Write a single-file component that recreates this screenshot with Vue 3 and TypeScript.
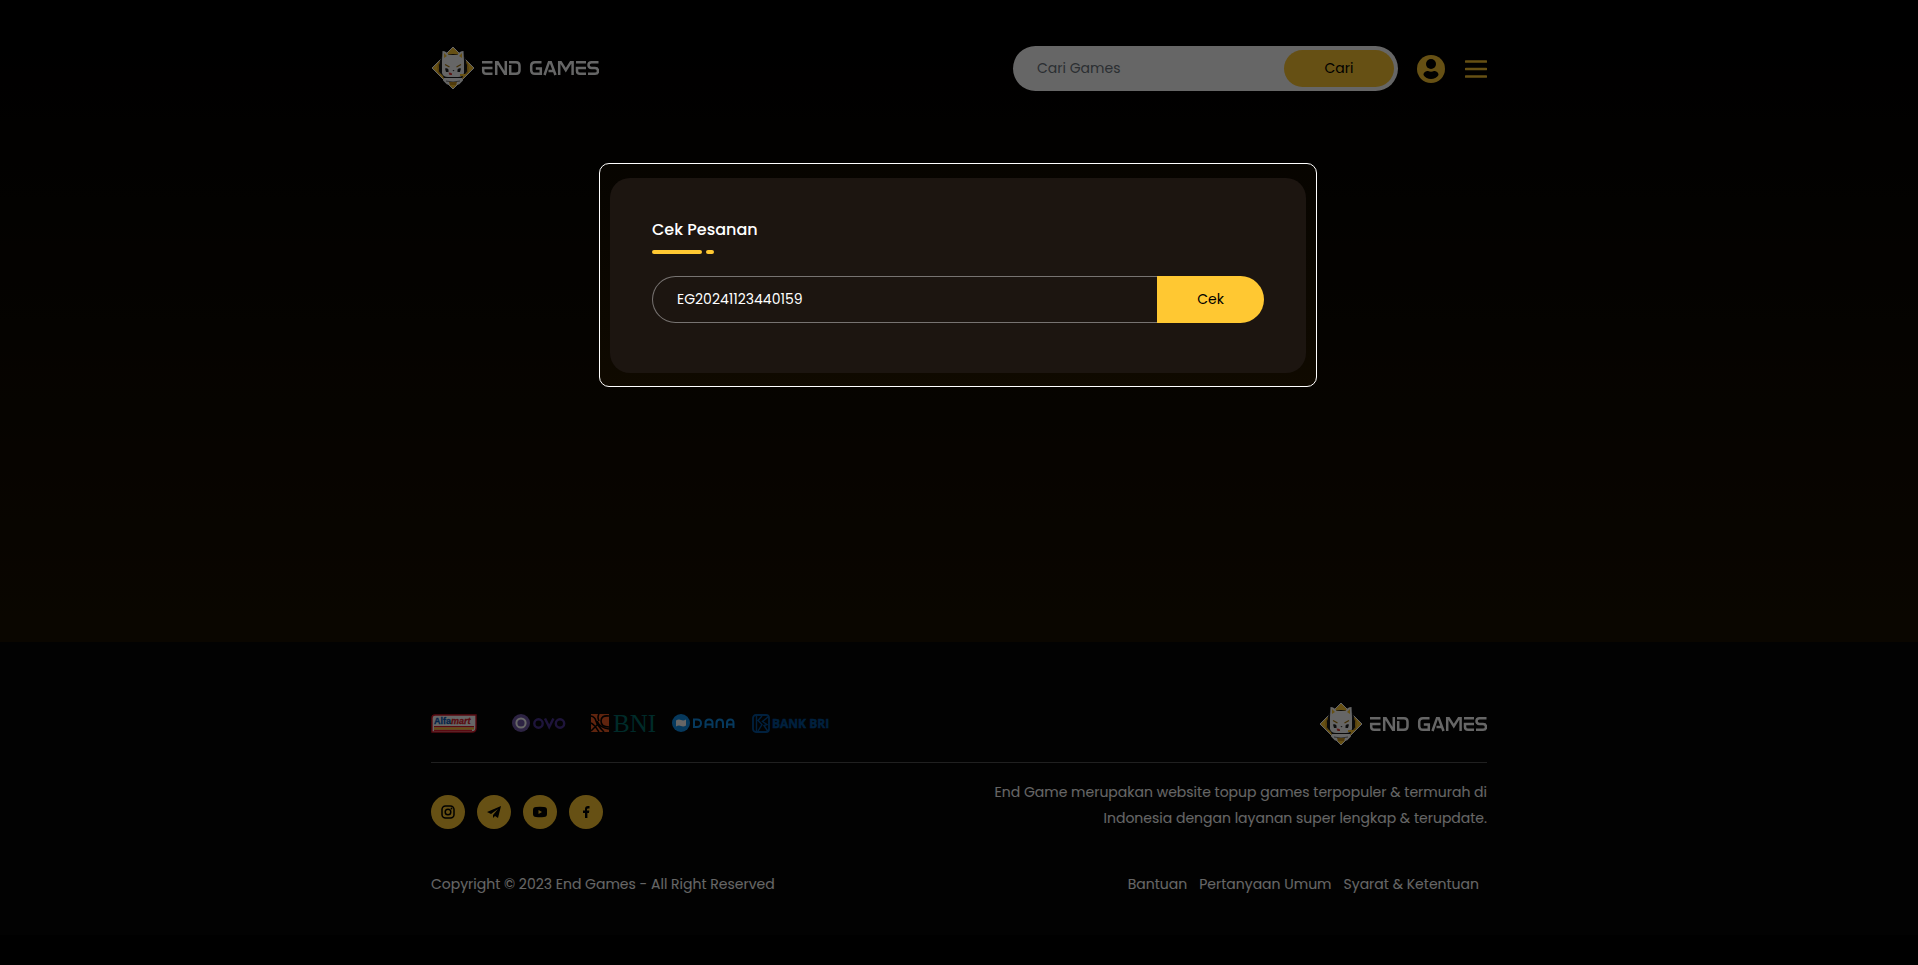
<script setup lang="ts">
import { ref } from 'vue'

const query = ref('')
const orderId = ref('EG20241123440159')
const links = ['Bantuan', 'Pertanyaan Umum', 'Syarat & Ketentuan']
</script>

<template>
  <div class="page">
    <svg class="defs" aria-hidden="true">
      <symbol id="brand" viewBox="0 0 168 44">
        <path d="M22 1 43 22 22 43 1 22Z" fill="#ffc832" stroke="#fff" stroke-width="1" />
        <path d="M10 11q12-6 24 0l2 7v8l-4 4-3 8H15l-3-8-4-4v-8Z" fill="#1a1a1a" />
        <path d="M8.500 16q-3 6 0 12M35.500 16q3 6 0 12" fill="none" stroke="#c8911c" stroke-width="1.200" />
        <path d="M11 15 11.500 5q4 0 6 4h9q2-4 6-4L33 15v12q-1 4-6 4H17q-5 0-6-4Z" fill="#fff" />
        <path d="M13 7v5l3-2ZM31 7v5l-3-2Z" fill="#ffc832" />
        <path d="M14 18.500l4.500 2.500M30 18.500l-4.500 2.500" stroke="#a8760c" stroke-width="1.300" />
        <path d="M14 22.500q2-1 3.500 1v2.500H15ZM30 22.500q-2-1-3.500 1v2.500H29Z" fill="#222" />
        <path d="M21.500 24h2l-1 1.500Z" fill="#444" />
        <path d="M17.500 26.500q2.500 0 3.500 1v1.500h-2.500Z" fill="#e23a35" />
        <path d="M29 28h5v2h-5Z" fill="#ffc832" />
        <path d="M13 32h18l1 2.500-4 4H16l-4-4Z" fill="#fff" />
        <path d="M15 35q7 2 14 0" fill="none" stroke="#777" stroke-width="1" />
        <path d="M18 36h8l-1 3h-6Z" fill="#c8911c" />
        <g fill="none" stroke="#fff" stroke-width="2.500">
          <path d="M51 16.200h10.500M61.500 22H52.200v3q0 2.800 3 2.800h6.300M65.200 29V16.200h1.500l7.200 11.600h.9V15M78 16.200h7q3.500 0 3.500 3.500v4.600q0 3.500-3.500 3.500h-5.800V19M110.500 16.200h-6.500q-3.800 0-3.800 3.800v4q0 3.800 3.800 3.800h5.800V22.500h-5M113.500 29l4.500-12.800h1.800L124.500 29M117.500 25h5M128.200 29V16.200h1.600l5 8 5-8h1.800V29M145 16.200h10M155 22h-9v3q0 2.800 3 2.800h6M167.500 16.200h-7q-3 0-3 2.900t3 2.900h3.500q3 0 3 2.900t-3 2.900h-7" />
        </g>
      </symbol>
    </svg>

    <header class="container header">
      <a href="#" aria-label="End Games"><svg class="brand"><use href="#brand" /></svg></a>
      <div class="tools">
        <form class="search" @submit.prevent>
          <input v-model="query" type="text" aria-label="Cari Games" placeholder="Cari Games">
          <button type="submit">Cari</button>
        </form>
        <a class="icon-link" href="#" aria-label="Akun">
          <svg width="28" height="28" viewBox="0 0 28 28">
            <circle cx="14" cy="14" r="14" fill="#ffc832" />
            <circle cx="14" cy="9" r="5" fill="#000" />
            <path d="M6.500 20c0-3 2.500-4 4.500-4 2 1 4 1 6 0 2 0 4.500 1 4.500 4-3 5.200-12 5.200-15 0Z" fill="#000" />
          </svg>
        </a>
        <button class="menu" type="button" aria-label="Menu">
          <svg width="22" height="18" viewBox="0 0 22 18">
            <path d="M1 1.500h20M1 9h20M1 16.500h20" stroke="#ffc832" stroke-width="2.600" stroke-linecap="round" />
          </svg>
        </button>
      </div>
    </header>

    <main>
      <section class="spotlight">
        <div class="card">
          <h1>Cek Pesanan</h1>
          <div class="rule"><i class="long" /><i class="short" /></div>
          <form class="check" @submit.prevent>
            <input v-model="orderId" type="text" aria-label="Nomor pesanan">
            <button type="submit">Cek</button>
          </form>
        </div>
      </section>
    </main>

    <footer>
      <div class="container">
        <div class="row partners">
          <div class="payments">
            <svg width="80" height="20" viewBox="0 0 80 20" role="img" aria-label="Alfamart">
              <path d="M4 1h41v13q0 4-4 4H1V4q0-3 3-3Z" fill="#fff" stroke="#e01b2b" stroke-width="1.400" />
              <path d="M3 12h40v1.500H3ZM3 15.500h38v1.500H3Z" fill="#e01b2b" />
              <path d="M3 13.500h40v2H3Z" fill="#ffc832" />
              <text x="3" y="10" class="alfa" fill="#0b5db8" stroke="#0b5db8">Alfa<tspan fill="#e01b2b" stroke="#e01b2b" font-style="italic">mart</tspan></text>
            </svg>
            <svg width="80" height="20" viewBox="0 0 80 20" role="img" aria-label="OVO">
              <circle cx="10" cy="9" r="9" fill="#7059a8" />
              <circle cx="10" cy="9" r="4.600" fill="none" stroke="#fff" stroke-width="2" />
              <g fill="none" stroke="#4c3494" stroke-width="2.400">
                <circle cx="27.500" cy="9.500" r="4.200" />
                <path d="M34 4.500l4.200 8.500 4.200-8.500" />
                <circle cx="49" cy="9.500" r="4.200" />
              </g>
            </svg>
            <svg width="80" height="20" viewBox="0 0 80 20" role="img" aria-label="BNI">
              <path d="M0 0h18v18H0Z" fill="#f15a23" />
              <path d="M0 2q4 1 5 5t8 11M0 9q3 1 8 9M18 2q-8-1-8 5t8 6M18 15q-9-1-12-8M0 17l7-7M8 0Q6 3 8 7" fill="none" stroke="#000" stroke-width="1.600" />
              <text x="22" y="18" class="bni" fill="#006b66">BNI</text>
            </svg>
            <svg width="80" height="20" viewBox="0 0 80 20" role="img" aria-label="DANA">
              <circle cx="10" cy="9" r="9" fill="#108ee9" />
              <path d="M5 6.500q2.500-1.500 5-.5t5-.5v6q-2.500 1.500-5 .5t-5 .5Z" fill="#fff" />
              <path d="M23 14V5.500h3q4 0 4 3.700t-4 3.700h-3M34.500 14V9q0-3.500 3.500-3.500T41.500 9v5M34.500 10.500h7M45.500 14V9q0-3.500 3.200-3.500T52 9v5M56 14V9q0-3.500 3.300-3.500T62.500 9v5M56 10.500h6.500" fill="none" stroke="#108ee9" stroke-width="2" />
            </svg>
            <svg width="80" height="20" viewBox="0 0 80 20" role="img" aria-label="Bank BRI">
              <rect x="2" y="1" width="16" height="17" rx="3" fill="none" stroke="#00529c" stroke-width="1.800" />
              <path d="M5.500 2v15M11 2 7 6.500l4 4L7 17M17 3l-5.500 4.500 4.500 3-3 1 4 6" fill="none" stroke="#00529c" stroke-width="1.400" />
              <text x="21" y="14" class="bri" fill="#00529c" stroke="#00529c">BANK BRI</text>
            </svg>
          </div>
          <svg class="brand" role="img" aria-label="End Games"><use href="#brand" /></svg>
        </div>

        <div class="row about">
          <nav class="social" aria-label="Media sosial">
            <a href="#" aria-label="Instagram">
              <svg viewBox="0 0 16 16"><rect x="2" y="2" width="12" height="12" rx="3.500" fill="none" stroke="#000" stroke-width="1.500" /><circle cx="8" cy="8" r="2.800" fill="none" stroke="#000" stroke-width="1.500" /><circle cx="11.500" cy="4.500" r=".9" /></svg>
            </a>
            <a href="#" aria-label="Telegram">
              <svg viewBox="0 0 16 16"><path d="M15 2 1 8l4 2 7-5-5 6v3l2-2 3 2Z" /></svg>
            </a>
            <a href="#" aria-label="YouTube">
              <svg viewBox="0 0 16 16"><path fill-rule="evenodd" d="M4 3q4-.4 8 0 3 0 3 3v4q0 3-3 3-4 .4-8 0-3 0-3-3V6q0-3 3-3Zm2.500 3v4L10 8Z" /></svg>
            </a>
            <a href="#" aria-label="Facebook">
              <svg viewBox="0 0 16 16"><path d="M7 14V9H5V6.500h2V5q0-3 3-3h1.500v2.400H10q-1 0-1 1v1.100h2.300L11 9H9.400v5Z" /></svg>
            </a>
          </nav>
          <p>End Game merupakan website topup games terpopuler &amp; termurah di Indonesia dengan layanan super lengkap &amp; terupdate.</p>
        </div>

        <div class="row legal">
          <span>Copyright © 2023 End Games - All Right Reserved</span>
          <nav aria-label="Bantuan">
            <a v-for="link in links" :key="link" href="#">{{ link }}</a>
          </nav>
        </div>
      </div>
    </footer>
  </div>
</template>

<style>
body {
  margin: 0;
  background: #000;
}
</style>

<style scoped>
.page {
  min-height: 100vh;
  overflow: hidden;
  color: #fff;
  font-family: Poppins, Inter, "Liberation Sans", sans-serif;
  font-size: 14px;
  background: linear-gradient(#000, #1a1000 642px, #000 642px);
}
* {
  box-sizing: border-box;
}
input,
button {
  margin: 0;
  border: 0;
  font: inherit;
}
button {
  cursor: pointer;
}
a {
  color: inherit;
  text-decoration: none;
}
.defs {
  position: absolute;
  width: 0;
  height: 0;
}
.container {
  width: 100%;
  max-width: 1080px;
  margin: 0 auto;
  padding: 0 12px;
}
.brand {
  display: block;
  width: 168px;
  height: 44px;
}
.header {
  display: flex;
  align-items: flex-start;
  justify-content: space-between;
  padding-top: 46px;
}
.tools {
  display: flex;
  align-items: center;
}
.search {
  display: flex;
  width: 385px;
  height: 45px;
  padding: 4px;
  border-radius: 23px;
  background: #fff;
}
.search input {
  flex: 1;
  min-width: 0;
  padding: 0 20px;
  background: none;
  color: #212529;
  outline: none;
}
.search input::placeholder {
  color: #6c757d;
  opacity: 1;
}
.search button {
  width: 110px;
  border-radius: 19px;
  background: #ffc832;
  color: #000;
}
.icon-link {
  display: flex;
  margin-left: 19px;
}
.menu {
  display: flex;
  margin-left: 20px;
  padding: 0;
  background: none;
}
main {
  padding-right: 2px;
}
.spotlight {
  position: relative;
  z-index: 1;
  max-width: 718px;
  margin: 72px auto 0;
  padding: 14px 10px 13px;
  border: 1px solid #fff;
  border-radius: 10px;
  box-shadow: 0 0 0 9999px rgba(0, 0, 0, 0.6);
}
.card {
  padding: 40px 42px 50px;
  border-radius: 20px;
  background: #1c1510;
}
h1 {
  margin: 0;
  font-size: 16px;
  font-weight: 500;
  line-height: 24px;
}
.rule {
  display: flex;
  gap: 4px;
  margin: 8px 0 22px;
}
.rule i {
  height: 4px;
  border-radius: 2px;
  background: #ffc832;
}
.long {
  width: 50px;
}
.short {
  width: 8px;
}
.check {
  display: flex;
  height: 47px;
}
.check input {
  flex: 1;
  min-width: 0;
  padding: 0 24px;
  border: 1px solid #777371;
  border-right: 0;
  border-radius: 24px 0 0 24px;
  background: none;
  color: #fff;
  outline: none;
}
.check button {
  width: 107px;
  border-radius: 0 24px 24px 0;
  background: #ffc832;
  color: #000;
}
footer {
  margin-top: 255px;
  padding: 60px 0 38px;
  background: #060606;
}
.row {
  display: flex;
  align-items: center;
  justify-content: space-between;
}
.partners {
  padding-bottom: 16px;
  border-bottom: 1px solid #505050;
}
.payments {
  display: flex;
}
.payments svg {
  overflow: visible;
}
.alfa {
  font: 700 9px "Liberation Sans", sans-serif;
  stroke-width: 0.3px;
}
.bni {
  font: 25px "Liberation Serif", serif;
}
.bri {
  font: 700 12px "Open Sans", sans-serif;
  stroke-width: 0.5px;
}
.about {
  align-items: flex-start;
  padding-top: 16px;
}
.social {
  display: flex;
  gap: 12px;
  padding-top: 16px;
}
.social a {
  display: grid;
  width: 34px;
  height: 34px;
  border-radius: 50%;
  background: #ffc832;
  place-items: center;
}
.social svg {
  width: 16px;
  height: 16px;
}
.about p {
  max-width: 500px;
  margin: 0;
  line-height: 26px;
  text-align: right;
}
.legal {
  margin-top: 40px;
  line-height: 26px;
}
.legal nav {
  display: flex;
  gap: 12px;
  padding-right: 8px;
}
</style>
